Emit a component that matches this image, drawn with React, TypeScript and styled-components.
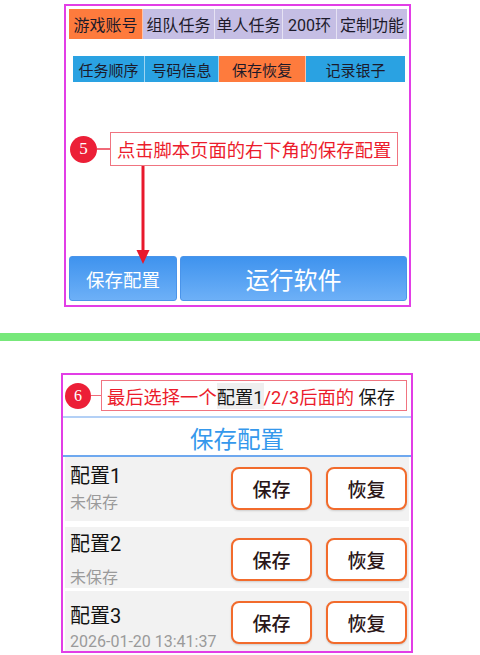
import React from "react";
import styled, { createGlobalStyle } from "styled-components";

const Global = createGlobalStyle`
  html, body { margin: 0; padding: 0; background: #ffffff; }
  body { font-family: Roboto, "Noto Sans CJK SC", sans-serif; }
  * { box-sizing: border-box; }
`;

const Page = styled.div`
  width: 480px;
  height: 655px;
  display: flex;
  flex-direction: column;
  overflow: hidden;
`;

const Frame = styled.div<{ $top: number; $left: number; $w: number; $h: number }>`
  position: relative;
  margin-top: ${(p) => p.$top}px;
  margin-left: ${(p) => p.$left}px;
  width: ${(p) => p.$w}px;
  height: ${(p) => p.$h}px;
  border: 2px solid #e23ee6;
  display: flex;
  flex-direction: column;
  flex: none;
`;

const TabRow = styled.div<{ $mt: number; $ml: number; $h: number }>`
  display: flex;
  margin-top: ${(p) => p.$mt}px;
  margin-left: ${(p) => p.$ml}px;
  height: ${(p) => p.$h}px;
`;

const Tab = styled.div<{ $w: number; $bg: string; $fs: number }>`
  width: ${(p) => p.$w}px;
  background: ${(p) => p.$bg};
  display: flex;
  align-items: center;
  justify-content: center;
  font-size: ${(p) => p.$fs}px;
  color: #1c1a2a;
  white-space: nowrap;
  border-right: 1px solid rgba(255, 255, 255, 0.55);
  &:last-child { border-right: none; }
`;

const CalloutRow = styled.div<{ $mt: number; $ml: number; $h: number }>`
  display: flex;
  align-items: center;
  margin-top: ${(p) => p.$mt}px;
  margin-left: ${(p) => p.$ml}px;
  height: ${(p) => p.$h}px;
`;

const Badge = styled.div<{ $d: number }>`
  width: ${(p) => p.$d}px;
  height: ${(p) => p.$d}px;
  border-radius: 50%;
  background: #ec1f37;
  color: #fff;
  font-family: "Liberation Serif", serif;
  font-size: ${(p) => Math.round(p.$d * 0.62)}px;
  display: flex;
  align-items: center;
  justify-content: center;
  flex: none;
`;

const Connector = styled.div<{ $w: number }>`
  width: ${(p) => p.$w}px;
  height: 1.5px;
  background: #f06a78;
  flex: none;
`;

const CalloutBox = styled.div<{ $w: number; $fs: number; $pl: number }>`
  width: ${(p) => p.$w}px;
  height: 100%;
  border: 1.5px solid #f07480;
  display: flex;
  align-items: center;
  padding-left: ${(p) => p.$pl}px;
  font-size: ${(p) => p.$fs}px;
  color: #ec1c2c;
  white-space: nowrap;
  background: #fff;
  position: relative;
  z-index: 1;
  flex: none;
`;

const Dark = styled.span<{ $bg?: string }>`
  color: #151515;
  background: ${(p) => p.$bg || "transparent"};
`;

const Spacer = styled.div`
  flex: 1;
`;

const BottomBar = styled.div`
  display: flex;
  gap: 3px;
  margin-left: 3px;
  margin-bottom: 4px;
  height: 45px;
`;

const BlueButton = styled.div<{ $w: number; $fs: number }>`
  width: ${(p) => p.$w}px;
  height: 100%;
  border-radius: 3px;
  border: 1px solid #4a94ea;
  background: linear-gradient(#3f93ee, #6db0f7);
  color: #fff;
  font-size: ${(p) => p.$fs}px;
  display: flex;
  align-items: center;
  justify-content: center;
`;

const ArrowSvg = styled.svg`
  position: absolute;
  left: 69px;
  top: 160px;
  z-index: 2;
`;

const GreenBar = styled.div`
  margin-top: 26px;
  height: 8px;
  background: #77e87a;
  flex: none;
`;

const Rule = styled.div<{ $mt: number; $h: number; $c: string }>`
  margin-top: ${(p) => p.$mt}px;
  height: ${(p) => p.$h}px;
  background: ${(p) => p.$c};
  flex: none;
`;

const Title = styled.div`
  height: 37px;
  display: flex;
  align-items: center;
  justify-content: center;
  font-size: 23.5px;
  color: #3598ec;
  padding-top: 2px;
`;

const ConfigRow = styled.div<{ $h: number; $mt: number }>`
  margin: ${(p) => p.$mt}px 2px 0 2px;
  height: ${(p) => p.$h}px;
  background: #f2f2f2;
  display: flex;
  align-items: flex-start;
  flex: none;
`;

const Info = styled.div<{ $pt: number; $gap: number }>`
  padding-top: ${(p) => p.$pt}px;
  padding-left: 5px;
  display: flex;
  flex-direction: column;
  gap: ${(p) => p.$gap}px;
`;

const Name = styled.div`
  font-size: 20px;
  line-height: 26px;
  color: #121212;
`;

const Status = styled.div`
  font-size: 16px;
  line-height: 20px;
  color: #9a9a9a;
`;

const Actions = styled.div<{ $pt: number }>`
  margin-left: auto;
  padding-top: ${(p) => p.$pt}px;
  padding-right: 2px;
  display: flex;
  gap: 14px;
`;

const ActionButton = styled.div`
  width: 81px;
  height: 43px;
  border: 2px solid #f26b2c;
  border-radius: 8px;
  background: #fff;
  box-shadow: 0 1px 2px rgba(0, 0, 0, 0.15);
  display: flex;
  align-items: center;
  justify-content: center;
  font-size: 19px;
  font-weight: 500;
  color: #2a1618;
`;

const rows = [
  { name: "配置1", status: "未保存", h: 64, mt: 0, pt: 6, gap: 4, apt: 10 },
  { name: "配置2", status: "未保存", h: 61, mt: 6, pt: 4, gap: 11, apt: 11 },
  { name: "配置3", status: "2026-01-20 13:41:37", h: 60, mt: 3, pt: 12, gap: 3, apt: 10 },
];

export default function App() {
  return (
    <Page>
      <Global />
      <Frame $top={4} $left={64} $w={347} $h={303}>
        <TabRow $mt={3} $ml={3} $h={30}>
          <Tab $w={74} $bg="#fe7b3d" $fs={16}>游戏账号</Tab>
          <Tab $w={72} $bg="#c5bee4" $fs={16}>组队任务</Tab>
          <Tab $w={68} $bg="#c5bee4" $fs={16}>单人任务</Tab>
          <Tab $w={54} $bg="#c5bee4" $fs={16}>200环</Tab>
          <Tab $w={70} $bg="#c5bee4" $fs={16}>定制功能</Tab>
        </TabRow>
        <TabRow $mt={17} $ml={7} $h={26}>
          <Tab $w={72} $bg="#2aa2e2" $fs={15}>任务顺序</Tab>
          <Tab $w={74} $bg="#2aa2e2" $fs={15}>号码信息</Tab>
          <Tab $w={87} $bg="#fe7b3d" $fs={15}>保存恢复</Tab>
          <Tab $w={99} $bg="#2aa2e2" $fs={15}>记录银子</Tab>
        </TabRow>
        <CalloutRow $mt={50} $ml={4} $h={34}>
          <Badge $d={27}>5</Badge>
          <Connector $w={13} />
          <CalloutBox $w={288} $fs={18.3} $pl={6}>点击脚本页面的右下角的保存配置</CalloutBox>
        </CalloutRow>
        <Spacer />
        <BottomBar>
          <BlueButton $w={108} $fs={18.5}>保存配置</BlueButton>
          <BlueButton $w={227} $fs={24}>运行软件</BlueButton>
        </BottomBar>
        <ArrowSvg width="16" height="98" viewBox="0 0 16 98">
          <line x1="8" y1="0" x2="8" y2="86" stroke="#e8182c" strokeWidth="3" />
          <polygon points="1.5,84 14.5,84 8,98" fill="#e8182c" />
        </ArrowSvg>
      </Frame>

      <GreenBar />

      <Frame $top={32} $left={61} $w={352} $h={280}>
        <CalloutRow $mt={5} $ml={2} $h={31}>
          <Badge $d={26}>6</Badge>
          <Connector $w={10} />
          <CalloutBox $w={306} $fs={18.3} $pl={5}>
            最后选择一个<Dark $bg="#efefef">配置1</Dark>/2/3后面的&nbsp;<Dark>保存</Dark>
          </CalloutBox>
        </CalloutRow>
        <Rule $mt={5} $h={2} $c="#b3d0f6" />
        <Title>保存配置</Title>
        <Rule $mt={0} $h={2} $c="#6ea8ef" />
        {rows.map((r) => (
          <ConfigRow key={r.name} $h={r.h} $mt={r.mt}>
            <Info $pt={r.pt} $gap={r.gap}>
              <Name>{r.name}</Name>
              <Status>{r.status}</Status>
            </Info>
            <Actions $pt={r.apt}>
              <ActionButton>保存</ActionButton>
              <ActionButton>恢复</ActionButton>
            </Actions>
          </ConfigRow>
        ))}
      </Frame>
    </Page>
  );
}
